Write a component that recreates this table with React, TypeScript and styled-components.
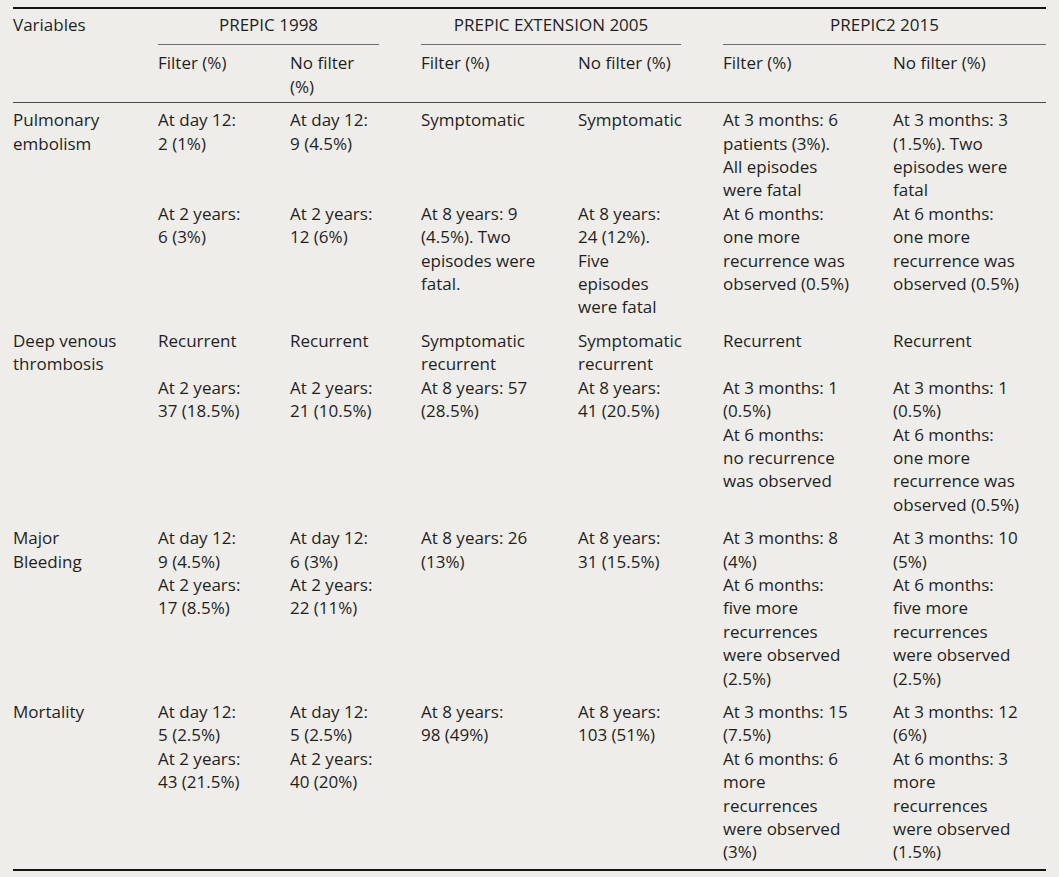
import React from "react";
import styled, { createGlobalStyle } from "styled-components";

const GlobalStyle = createGlobalStyle`
  html, body {
    margin: 0;
    padding: 0;
    background: #eeede9;
  }
  body {
    font-family: "Open Sans", "Liberation Sans", sans-serif;
    font-size: 17px;
    line-height: 23.4px;
    color: #1f1f1f;
  }
`;

const COLS = "145px 132px 131px 157px 145px 170px 153px";

const Page = styled.div`
  padding: 7px 13px 0 13px;
`;

const Table = styled.div`
  width: 1033px;
  border-top: 2px solid #141414;
  border-bottom: 2px solid #141414;
`;

const Head = styled.div`
  display: grid;
  grid-template-columns: ${COLS};
  border-bottom: 1px solid #4a4a4a;
`;

const VarHead = styled.div`
  grid-row: 1 / span 2;
  padding-top: 4px;
`;

const GroupHead = styled.div<{ $trim?: boolean }>`
  grid-column: span 2;
  padding: 4px 0 8px;
  margin-right: ${(p) => (p.$trim ? "42px" : "0")};
  border-bottom: 1px solid #6e6e6e;
  text-align: center;
`;

const SubHead = styled.div`
  padding: 6px 0 4px;
  white-space: pre;
`;

const Group = styled.div`
  display: grid;
  grid-template-columns: ${COLS};
  padding: 5px 0;
`;

const Label = styled.div<{ $rows: number }>`
  grid-row: 1 / span ${(p) => p.$rows};
  white-space: pre;
`;

const Cell = styled.div`
  white-space: pre;
`;

type RowGroup = { label: string; rows: string[][] };

const data: RowGroup[] = [
  {
    label: "Pulmonary\nembolism",
    rows: [
      [
        "At day 12:\n2 (1%)",
        "At day 12:\n9 (4.5%)",
        "Symptomatic",
        "Symptomatic",
        "At 3 months: 6\npatients (3%).\nAll episodes\nwere fatal",
        "At 3 months: 3\n(1.5%). Two\nepisodes were\nfatal",
      ],
      [
        "At 2 years:\n6 (3%)",
        "At 2 years:\n12 (6%)",
        "At 8 years: 9\n(4.5%). Two\nepisodes were\nfatal.",
        "At 8 years:\n24 (12%).\nFive\nepisodes\nwere fatal",
        "At 6 months:\none more\nrecurrence was\nobserved (0.5%)",
        "At 6 months:\none more\nrecurrence was\nobserved (0.5%)",
      ],
    ],
  },
  {
    label: "Deep venous\nthrombosis",
    rows: [
      [
        "Recurrent",
        "Recurrent",
        "Symptomatic\nrecurrent",
        "Symptomatic\nrecurrent",
        "Recurrent",
        "Recurrent",
      ],
      [
        "At 2 years:\n37 (18.5%)",
        "At 2 years:\n21 (10.5%)",
        "At 8 years: 57\n(28.5%)",
        "At 8 years:\n41 (20.5%)",
        "At 3 months: 1\n(0.5%)\nAt 6 months:\nno recurrence\nwas observed",
        "At 3 months: 1\n(0.5%)\nAt 6 months:\none more\nrecurrence was\nobserved (0.5%)",
      ],
    ],
  },
  {
    label: "Major\nBleeding",
    rows: [
      [
        "At day 12:\n9 (4.5%)\nAt 2 years:\n17 (8.5%)",
        "At day 12:\n6 (3%)\nAt 2 years:\n22 (11%)",
        "At 8 years: 26\n(13%)",
        "At 8 years:\n31 (15.5%)",
        "At 3 months: 8\n(4%)\nAt 6 months:\nfive more\nrecurrences\nwere observed\n(2.5%)",
        "At 3 months: 10\n(5%)\nAt 6 months:\nfive more\nrecurrences\nwere observed\n(2.5%)",
      ],
    ],
  },
  {
    label: "Mortality",
    rows: [
      [
        "At day 12:\n5 (2.5%)\nAt 2 years:\n43 (21.5%)",
        "At day 12:\n5 (2.5%)\nAt 2 years:\n40 (20%)",
        "At 8 years:\n98 (49%)",
        "At 8 years:\n103 (51%)",
        "At 3 months: 15\n(7.5%)\nAt 6 months: 6\nmore\nrecurrences\nwere observed\n(3%)",
        "At 3 months: 12\n(6%)\nAt 6 months: 3\nmore\nrecurrences\nwere observed\n(1.5%)",
      ],
    ],
  },
];

const subHeads = [
  "Filter (%)",
  "No filter\n(%)",
  "Filter (%)",
  "No filter (%)",
  "Filter (%)",
  "No filter (%)",
];

export default function App() {
  return (
    <>
      <GlobalStyle />
      <Page>
        <Table>
          <Head>
            <VarHead>Variables</VarHead>
            <GroupHead $trim>PREPIC 1998</GroupHead>
            <GroupHead $trim>PREPIC EXTENSION 2005</GroupHead>
            <GroupHead>PREPIC2 2015</GroupHead>
            {subHeads.map((s, i) => (
              <SubHead key={i}>{s}</SubHead>
            ))}
          </Head>
          {data.map((g, gi) => (
            <Group key={gi}>
              <Label $rows={g.rows.length}>{g.label}</Label>
              {g.rows.flatMap((r, ri) =>
                r.map((c, ci) => <Cell key={`${ri}-${ci}`}>{c}</Cell>)
              )}
            </Group>
          ))}
        </Table>
      </Page>
    </>
  );
}
